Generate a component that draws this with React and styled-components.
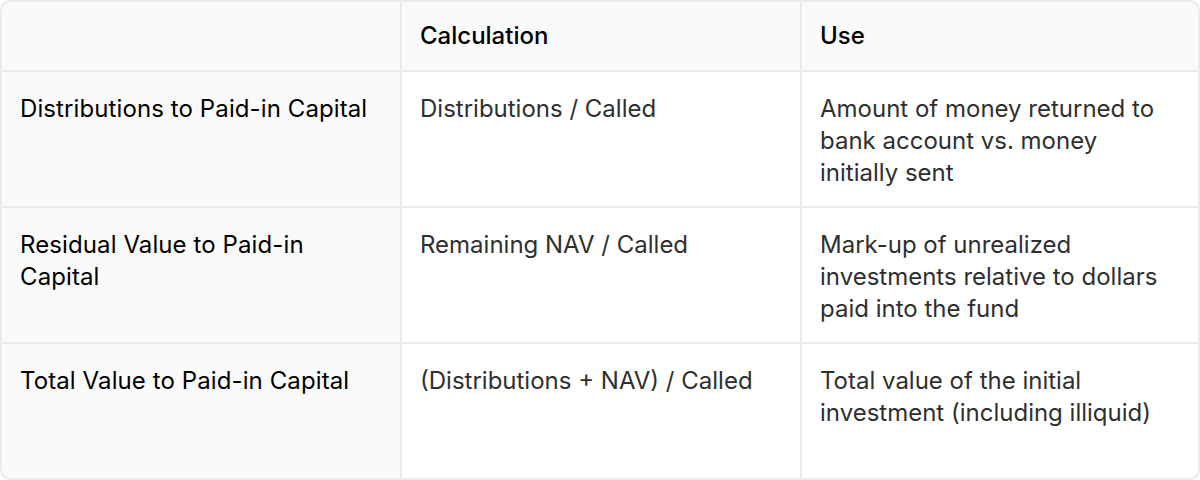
import React from 'react';
import styled, { createGlobalStyle } from 'styled-components';

const GlobalStyle = createGlobalStyle`
  html, body {
    margin: 0;
    padding: 0;
    background: #ffffff;
  }
  body {
    font-family: Inter, "Noto Sans", "Liberation Sans", sans-serif;
  }
`;

const Table = styled.div`
  box-sizing: border-box;
  width: 1200px;
  height: 480px;
  display: grid;
  grid-template-columns: 398px 398px 1fr;
  grid-template-rows: 68px 134px 134px 1fr;
  gap: 2px;
  border: 2px solid #ebebeb;
  border-radius: 10px;
  background: #ebebeb;
  overflow: hidden;
`;

const Cell = styled.div`
  box-sizing: border-box;
  padding: 21px 18px 19px;
  font-size: 24px;
  line-height: 32px;
  letter-spacing: ${({ strong }) => (strong ? '0.1px' : '0')};
  background: ${({ shaded }) => (shaded ? '#fafafa' : '#ffffff')};
  color: ${({ strong }) => (strong ? '#000000' : '#2f2f2f')};
  font-weight: 400;
`;

const HeadCell = styled(Cell)`
  display: flex;
  align-items: center;
  padding-top: 0;
  padding-bottom: 0;
  background: #fafafa;
  color: #000000;
  letter-spacing: 0;
  font-weight: 500;
`;

const rows = [
  {
    metric: 'Distributions to Paid-in Capital',
    calc: 'Distributions / Called',
    use: 'Amount of money returned to bank account vs. money initially sent',
  },
  {
    metric: 'Residual Value to Paid-in Capital',
    calc: 'Remaining NAV / Called',
    use: 'Mark-up of unrealized investments relative to dollars paid into the fund',
  },
  {
    metric: 'Total Value to Paid-in Capital',
    calc: '(Distributions + NAV) / Called',
    use: 'Total value of the initial investment (including illiquid)',
  },
];

export default function App() {
  return (
    <>
      <GlobalStyle />
      <Table>
        <HeadCell />
        <HeadCell>Calculation</HeadCell>
        <HeadCell>Use</HeadCell>
        {rows.map((row) => (
          <React.Fragment key={row.metric}>
            <Cell shaded strong>{row.metric}</Cell>
            <Cell>{row.calc}</Cell>
            <Cell>{row.use}</Cell>
          </React.Fragment>
        ))}
      </Table>
    </>
  );
}
